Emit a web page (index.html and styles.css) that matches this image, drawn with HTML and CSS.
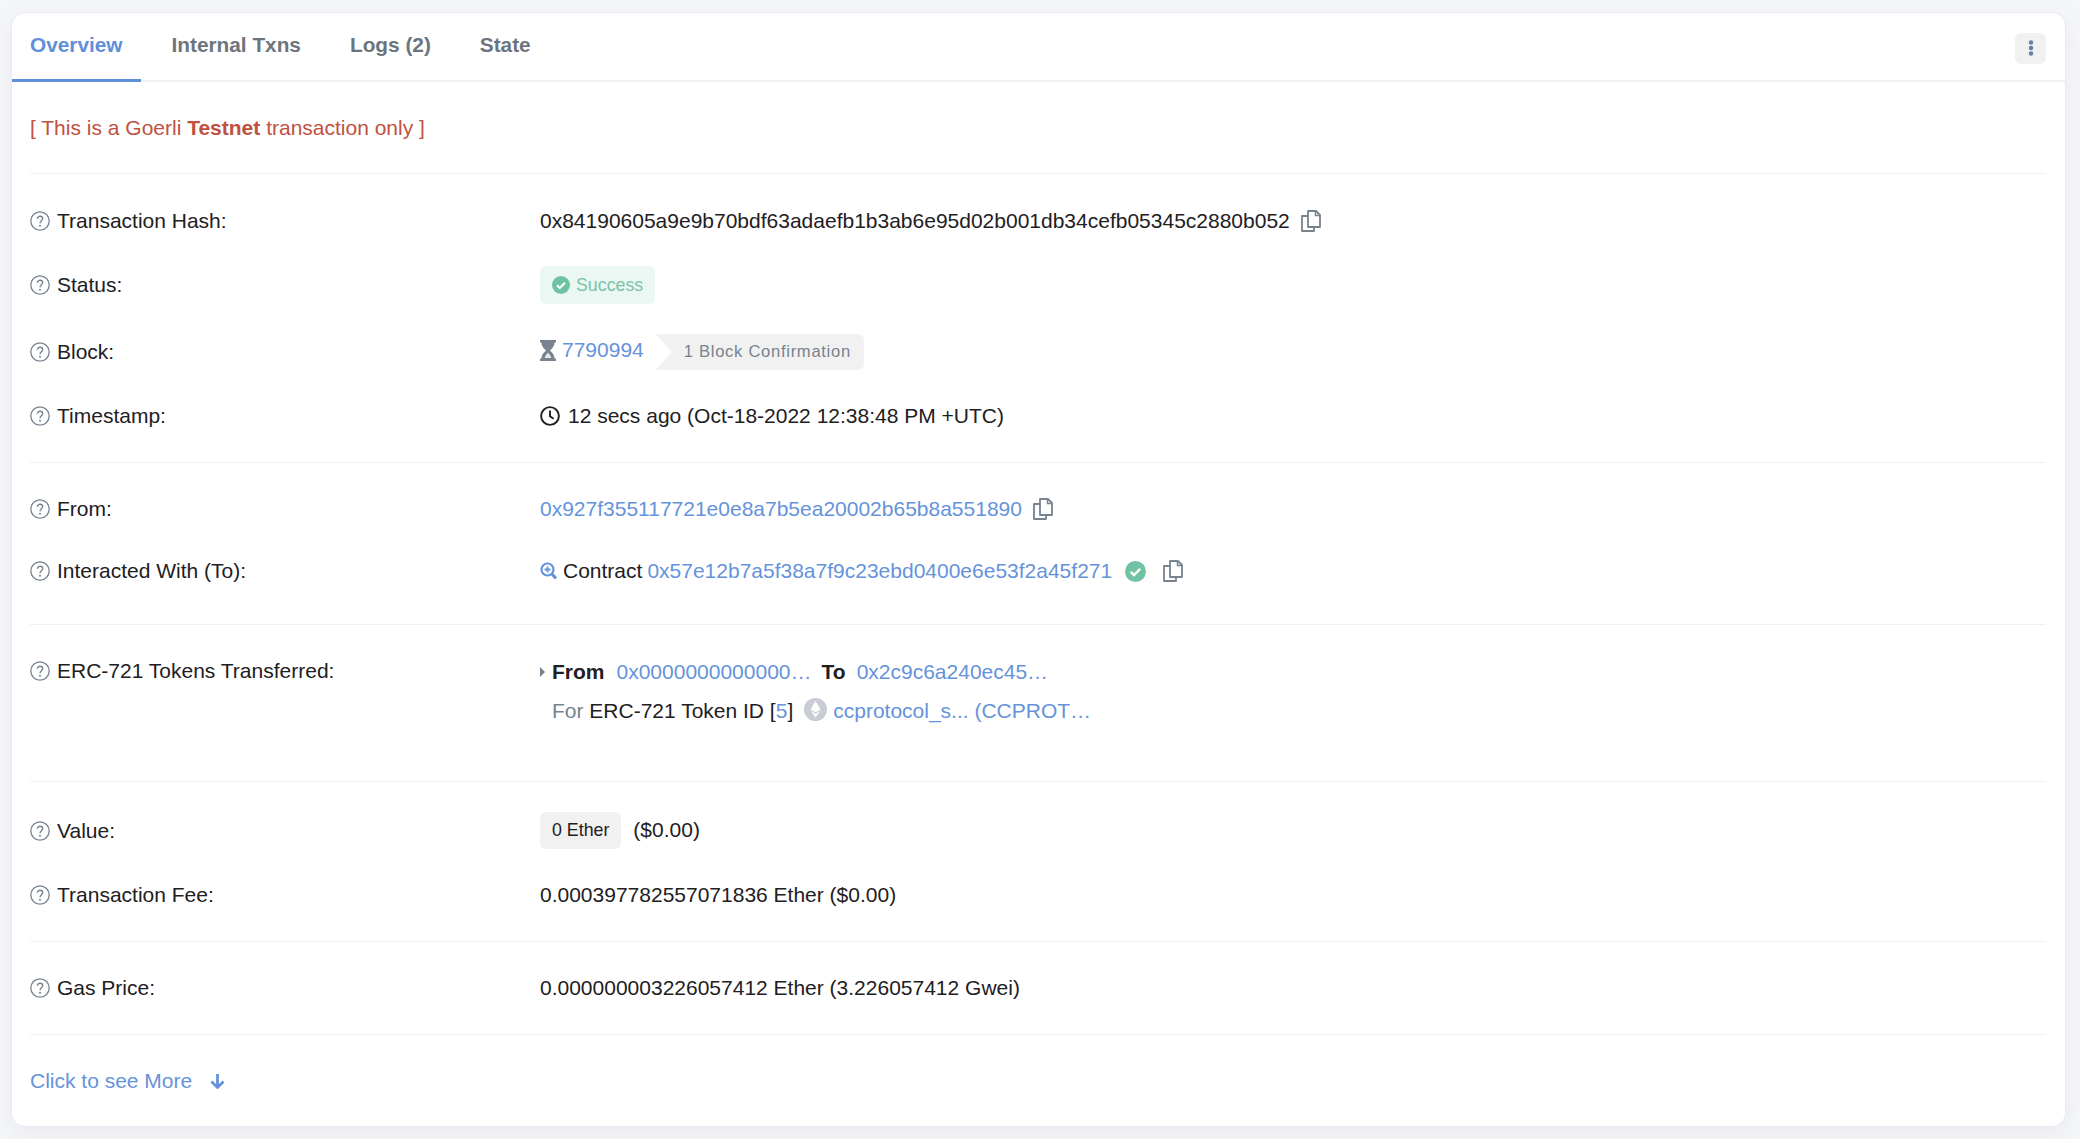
FILE: index.html
```html
<!DOCTYPE html>
<html lang="en">
<head>
    <meta charset="UTF-8">
    <title>Transaction Details</title>
    <link rel="stylesheet" href="styles.css">
</head>
<body>
    <svg class="sprites" width="0" height="0">
        <symbol id="help" viewBox="0 0 20 20">
            <circle cx="10" cy="10" r="9.2" fill="none" stroke="#77838f" stroke-width="1.3"/>
            <path d="M7.4 7.8c0-1.6 1.2-2.6 2.7-2.6s2.6 1 2.6 2.3c0 2.2-2.7 2.2-2.7 4.7" fill="none" stroke="#77838f" stroke-width="1.4"/>
            <circle cx="10" cy="14.8" r="1" fill="#77838f"/>
        </symbol>
        <symbol id="copy" viewBox="0 0 20 22">
            <path d="M7 1h8l4 4v12h-12z" fill="none" stroke="#77838f" stroke-width="1.8" stroke-linejoin="round"/>
            <path d="M14.500 1v4.500h4.500" fill="none" stroke="#77838f" stroke-width="1.500"/>
            <path d="M7 6h-6v15h12v-4" fill="none" stroke="#77838f" stroke-width="1.8" stroke-linejoin="round"/>
        </symbol>
        <symbol id="check" viewBox="0 0 20 20">
            <circle cx="10" cy="10" r="10" fill="#6fc2a2"/>
            <path d="M5.500 10.300l3.100 3.100 5.900-6" fill="none" stroke="#fff" stroke-width="2.400"/>
        </symbol>
    </svg>

    <div class="card">
        <div class="tabs">
            <a class="tab active">Overview</a>
            <a class="tab">Internal Txns</a>
            <a class="tab">Logs (2)</a>
            <a class="tab">State</a>
            <button class="menu-btn">
                <svg width="6" height="16" viewBox="0 0 6 16"><circle cx="3" cy="2.500" r="2.200"/><circle cx="3" cy="8" r="2.200"/><circle cx="3" cy="13.500" r="2.200"/></svg>
            </button>
        </div>

        <div class="body">
            <div class="section section-alert">
                <div class="testnet">[ This is a Goerli <b>Testnet</b> transaction only ]</div>
            </div>

            <div class="section section-main">
                <div class="row">
                    <div class="label"><svg class="help"><use href="#help"/></svg>Transaction Hash:</div>
                    <div class="value">0x84190605a9e9b70bdf63adaefb1b3ab6e95d02b001db34cefb05345c2880b052<svg class="copy"><use href="#copy"/></svg></div>
                </div>
                <div class="row">
                    <div class="label"><svg class="help"><use href="#help"/></svg>Status:</div>
                    <div class="value"><span class="status"><svg class="status-icon"><use href="#check"/></svg>Success</span></div>
                </div>
                <div class="row">
                    <div class="label"><svg class="help"><use href="#help"/></svg>Block:</div>
                    <div class="value">
                        <svg class="hourglass" width="16" height="21" viewBox="0 0 16 21"><path d="M0 0h16v2.500h-1.500c0 4-2.700 6-4.500 8 1.800 2 4.500 4 4.500 8h1.500v2.500h-16v-2.500h1.500c0-4 2.700-6 4.500-8-1.800-2-4.500-4-4.500-8h-1.500z" fill="#77838f"/><path d="M8 12.800c-1.200 1.400-2.800 2.800-3.300 5.200h6.600c-.5-2.400-2.100-3.800-3.300-5.200z" fill="#e4e7eb"/></svg>
                        <a class="link block-no">7790994</a>
                        <span class="confirm">1 Block Confirmation</span>
                    </div>
                </div>
                <div class="row">
                    <div class="label"><svg class="help"><use href="#help"/></svg>Timestamp:</div>
                    <div class="value">
                        <svg class="clock" width="20" height="20" viewBox="0 0 20 20"><circle cx="10" cy="10" r="8.900" fill="none" stroke="#1e2022" stroke-width="1.900"/><path d="M10 4.500v5.800l3.600 2.500" fill="none" stroke="#1e2022" stroke-width="1.900"/></svg>
                        <span>12 secs ago (Oct-18-2022 12:38:48 PM +UTC)</span>
                    </div>
                </div>
            </div>

            <div class="section section-to">
                <div class="row">
                    <div class="label"><svg class="help"><use href="#help"/></svg>From:</div>
                    <div class="value"><a class="link">0x927f355117721e0e8a7b5ea20002b65b8a551890</a><svg class="copy"><use href="#copy"/></svg></div>
                </div>
                <div class="row">
                    <div class="label"><svg class="help"><use href="#help"/></svg>Interacted With (To):</div>
                    <div class="value">
                        <svg class="zoom-icon" width="17" height="18" viewBox="0 0 17 18"><circle cx="7.500" cy="7.500" r="6" fill="none" stroke="#6593da" stroke-width="2.200"/><path d="M12 12l4 4.500" stroke="#6593da" stroke-width="3"/><path d="M7.500 4.500v6M4.500 7.500h6" stroke="#6593da" stroke-width="1.800"/></svg>
                        <span>Contract</span>
                        <a class="link contract">0x57e12b7a5f38a7f9c23ebd0400e6e53f2a45f271</a>
                        <svg class="verified"><use href="#check"/></svg>
                        <svg class="copy copy-to"><use href="#copy"/></svg>
                    </div>
                </div>
            </div>

            <div class="section section-tokens">
                <div class="row row-top">
                    <div class="label"><svg class="help"><use href="#help"/></svg>ERC-721 Tokens Transferred:</div>
                    <div class="tokens">
                        <div class="token-line">
                            <span class="caret"></span>
                            <b>From</b>
                            <a class="link from-addr">0x0000000000000…</a>
                            <b>To</b>
                            <a class="link to-addr">0x2c9c6a240ec45…</a>
                        </div>
                        <div class="token-line token-id">
                            <span><span class="muted">For</span> ERC-721 Token ID [<a class="link">5</a>]</span>
                            <svg class="eth" width="23" height="23" viewBox="0 0 23 23"><circle cx="11.500" cy="11.500" r="11.500" fill="#c9ccd4"/><path d="M11.500 3l5 8.600-5 3-5-3z" fill="#fff"/><path d="M6.800 12.900l4.700 2.800 4.700-2.800-4.700 6.600z" fill="#fff"/></svg>
                            <a class="link">ccprotocol_s... (CCPROT…</a>
                        </div>
                    </div>
                </div>
            </div>

            <div class="section">
                <div class="row">
                    <div class="label"><svg class="help"><use href="#help"/></svg>Value:</div>
                    <div class="value"><span class="ether">0 Ether</span><span class="usd">($0.00)</span></div>
                </div>
                <div class="row">
                    <div class="label"><svg class="help"><use href="#help"/></svg>Transaction Fee:</div>
                    <div class="value">0.000397782557071836 Ether ($0.00)</div>
                </div>
            </div>

            <div class="section">
                <div class="row">
                    <div class="label"><svg class="help"><use href="#help"/></svg>Gas Price:</div>
                    <div class="value">0.000000003226057412 Ether (3.226057412 Gwei)</div>
                </div>
            </div>

            <div class="section more">
                <a class="link">Click to see More</a>
                <svg class="more-arrow" width="15" height="16" viewBox="0 0 15 16"><path d="M7.500 1v13M1.500 8.500l6 6 6-6" fill="none" stroke="#6593da" stroke-width="2.800"/></svg>
            </div>
        </div>
    </div>
</body>
</html>
```

FILE: styles.css
```css
* {
    box-sizing: border-box;
}
html, body {
    height: 100%;
}
body {
    font-family: "Liberation Sans", Arial, sans-serif;
    font-size: 21px;
    line-height: 32px;
    color: #1e2022;
    background: #f5f6f9;
    margin: 0;
    padding: 12px 14px 0 11px;
    overflow: hidden;
}
.sprites {
    display: block;
    height: 0;
}
.card {
    background: #fff;
    border: 1px solid #e9ebf3;
    border-radius: 14px;
    box-shadow: 0 8px 20px rgba(189, 197, 209, 0.2);
    height: 1115px;
}
.tabs {
    display: flex;
    height: 69px;
    border-bottom: 2px solid #eef0f4;
    position: relative;
}
.tab {
    font-size: 20.8px;
    font-weight: bold;
    color: #6c757e;
    padding: 0 18px;
    margin-right: 13px;
    height: 69px;
    line-height: 64px;
}
.tab.active {
    color: #5f8fd9;
    border-bottom: 3px solid #5f8fd9;
}
.menu-btn {
    position: absolute;
    top: 20px;
    right: 19px;
    width: 31px;
    height: 31px;
    padding: 0 0 2px;
    border: none;
    border-radius: 6px;
    background: #f1f1f1;
    display: flex;
    align-items: center;
    justify-content: center;
}
.menu-btn svg {
    fill: #5f7fa8;
}
.body {
    padding: 0 19px 0 18px;
}
.section {
    padding: 30px 0;
    border-bottom: 1px solid #eef0f4;
}
.section:last-child {
    border-bottom: none;
}
.section-alert {
    padding-bottom: 29px;
}
.section-main {
    padding-top: 31px;
}
.section-main .row:first-child {
    margin-bottom: 29px;
}
.section-to {
    padding-bottom: 37px;
}
.section-tokens {
    padding-bottom: 54px;
}
.testnet {
    color: #c0513f;
}
.row {
    display: flex;
    align-items: center;
    margin-bottom: 30px;
}
.row:last-child {
    margin-bottom: 0;
}
.row-top {
    align-items: flex-start;
}
.label {
    width: 510px;
    flex-shrink: 0;
    display: flex;
    align-items: center;
}
.help {
    width: 20px;
    height: 20px;
    margin-right: 7px;
}
.value {
    display: flex;
    align-items: center;
    white-space: nowrap;
}
.link {
    color: #6593da;
    text-decoration: none;
}
.copy {
    width: 20px;
    height: 22px;
    margin-left: 11px;
}
.status {
    display: flex;
    align-items: center;
    height: 38px;
    padding: 0 12px;
    font-size: 17.8px;
    color: #7cc2a5;
    background: #ebf7f3;
    border-radius: 6px;
}
.status-icon {
    width: 18px;
    height: 18px;
    margin-right: 6px;
}
.hourglass {
    margin-right: 6px;
    position: relative;
    top: -2px;
}
.block-no {
    position: relative;
    top: -2px;
}
.confirm {
    height: 36px;
    line-height: 36px;
    margin-left: 12px;
    padding: 0 13px 0 28px;
    font-size: 16.6px;
    letter-spacing: 0.7px;
    color: #77838f;
    background: #f1f1f1;
    border-radius: 0 6px 6px 0;
    clip-path: polygon(0 0, 100% 0, 100% 100%, 0 100%, 16px 50%);
}
.clock {
    margin-right: 8px;
}
.zoom-icon {
    margin-right: 6px;
}
.contract {
    margin-left: 5px;
}
.verified {
    width: 21px;
    height: 21px;
    margin-left: 13px;
}
.copy-to {
    margin-left: 17px;
}
.tokens {
    display: flex;
    flex-direction: column;
    gap: 7px;
    padding-top: 1px;
}
.token-line {
    display: flex;
    align-items: center;
    white-space: nowrap;
}
.token-id {
    padding-left: 12px;
}
.caret {
    width: 0;
    height: 0;
    border-left: 5px solid #77838f;
    border-top: 5px solid transparent;
    border-bottom: 5px solid transparent;
    margin-right: 7px;
}
.from-addr {
    margin: 0 10px 0 12px;
}
.to-addr {
    margin-left: 11px;
}
.muted {
    color: #77838f;
}
.eth {
    margin: 0 6px 0 11px;
    position: relative;
    top: -2px;
}
.ether {
    display: inline-block;
    height: 37px;
    line-height: 37px;
    padding: 0 12px;
    font-size: 17.8px;
    background: #f1f1f1;
    border-radius: 6px;
    margin-right: 12px;
}
.usd {
    position: relative;
    top: -1px;
}
.more {
    display: flex;
    align-items: center;
}
.more-arrow {
    margin-left: 18px;
}
```
